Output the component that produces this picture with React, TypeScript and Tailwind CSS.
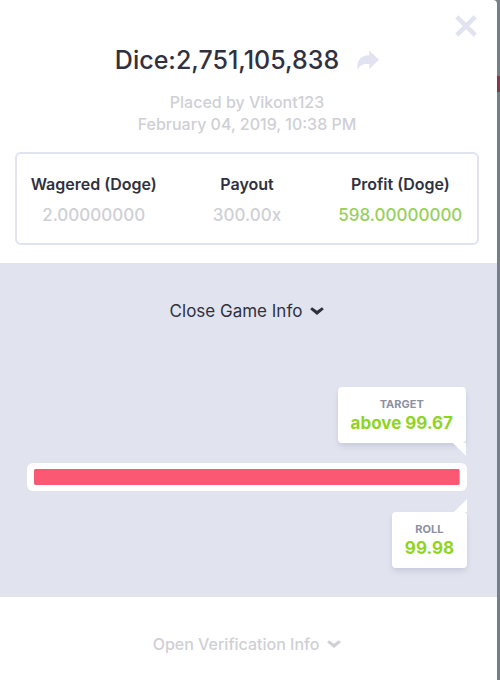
import clsx from 'clsx';

interface Stat {
  label: string;
  value: string;
  valueClass: string;
}

const stats: Stat[] = [
  { label: 'Wagered (Doge)', value: '2.00000000', valueClass: 'text-[#cfcfd5]' },
  { label: 'Payout', value: '300.00x', valueClass: 'text-[#cfcfd5]' },
  { label: 'Profit (Doge)', value: '598.00000000', valueClass: 'text-[#97d05c]' },
];

const target = 99.67;

function Chevron() {
  return (
    <svg className="h-2 w-3.5" viewBox="0 0 14 8" fill="currentColor">
      <path d="M0.2 2.2 L2 0.3 L7 3.7 L12 0.3 L13.8 2.2 L7 8 Z" />
    </svg>
  );
}

function ShareIcon() {
  return (
    <svg className="h-5 w-[22px]" viewBox="0 0 22 20" fill="currentColor">
      <path d="M12.3 0.5 L22 9.8 L12.3 19 V14 C6.5 13.4 2.5 15 0.6 20 C-0.9 11 3.5 5.3 12.3 5.2 Z" />
    </svg>
  );
}

export default function App() {
  return (
    <div className="flex min-h-screen w-full bg-[#747f8a] font-['Inter','Lato',sans-serif] text-[#2f3140]">
      <main className="relative flex min-w-0 flex-1 flex-col rounded-tr-sm bg-white">
        <button aria-label="Close" className="absolute top-[15px] right-5 text-[#e1e3f0]">
          <svg className="size-[22px]" viewBox="0 0 22 22" fill="none" stroke="currentColor" strokeWidth="4.6">
            <path d="M1.8 1.8 L20.2 20.2 M20.2 1.8 L1.8 20.2" />
          </svg>
        </button>

        {/* Bet summary */}
        <header className="flex flex-col pt-11 pr-[18px] pl-[15px] text-center">
          <div className="flex items-center justify-center gap-[18px]">
            <h1 className="text-[25px] leading-8 font-medium">Dice:2,751,105,838</h1>
            <button aria-label="Share" className="text-[#e1e3f0]">
              <ShareIcon />
            </button>
          </div>
          <p className="mt-[15px] text-[16px] leading-[22px] font-medium text-[#cfcfd5]">
            Placed by Vikont123
            <br />
            February 04, 2019, 10:38 PM
          </p>
          <dl className="mt-[17px] grid grid-cols-3 rounded-md border-2 border-[#e1e3f0] pt-[18px] pb-4">
            {stats.map((stat) => (
              <div key={stat.label} className="whitespace-nowrap">
                <dt className="text-[16px] leading-6 font-semibold">{stat.label}</dt>
                <dd className={clsx('mt-[7px] text-[17px] leading-6 font-medium', stat.valueClass)}>
                  {stat.value}
                </dd>
              </div>
            ))}
          </dl>
        </header>

        {/* Game info */}
        <section className="mt-[18px] flex flex-col bg-[#e1e3ef] pt-9 pr-[30px] pb-[29px] pl-[27px]">
          <button className="flex items-center justify-center gap-2 self-center text-[17px] leading-6">
            Close Game Info
            <Chevron />
          </button>

          <div className="relative mt-16 mr-px self-end rounded-sm bg-white px-[13px] pt-2 pb-2.5 text-center shadow-md shadow-[#c9ccdb]">
            <div className="text-[11px] leading-[18px] font-bold text-[#8c90a3]">TARGET</div>
            <div className="text-[17px] leading-5 font-bold text-[#8fd41f]">above 99.67</div>
            <svg className="absolute top-full right-0 h-[13px] w-[13px]" viewBox="0 0 13 13" fill="white">
              <path d="M0 0 H13 V13 Z" />
            </svg>
          </div>

          <div className="mt-5 rounded-md bg-white px-[7px] py-1.5">
            <div className="flex h-4 overflow-hidden rounded-xs bg-[#9ad24d]">
              <div className="bg-[#fb5873]" style={{ width: `${target}%` }} />
            </div>
          </div>

          <div className="relative mt-[21px] self-end rounded-sm bg-white px-[13px] pt-2 pb-2.5 text-center shadow-md shadow-[#c9ccdb]">
            <svg className="absolute right-0 bottom-full h-[13px] w-[13px]" viewBox="0 0 13 13" fill="white">
              <path d="M0 13 H13 V0 Z" />
            </svg>
            <div className="text-[11px] leading-[18px] font-bold text-[#8c90a3]">ROLL</div>
            <div className="text-[17px] leading-5 font-bold text-[#8fd41f]">99.98</div>
          </div>
        </section>

        <div className="flex justify-center pt-[35px] pr-[3px]">
          <button className="flex items-center gap-2 text-[16px] leading-6 font-medium text-[#cfcfd5]">
            Open Verification Info
            <Chevron />
          </button>
        </div>
      </main>

      {/* Page behind the dialog */}
      <aside className="w-[3px] shrink-0 pt-[76px]">
        <div className="h-4 bg-[#82384f]" />
      </aside>
    </div>
  );
}
